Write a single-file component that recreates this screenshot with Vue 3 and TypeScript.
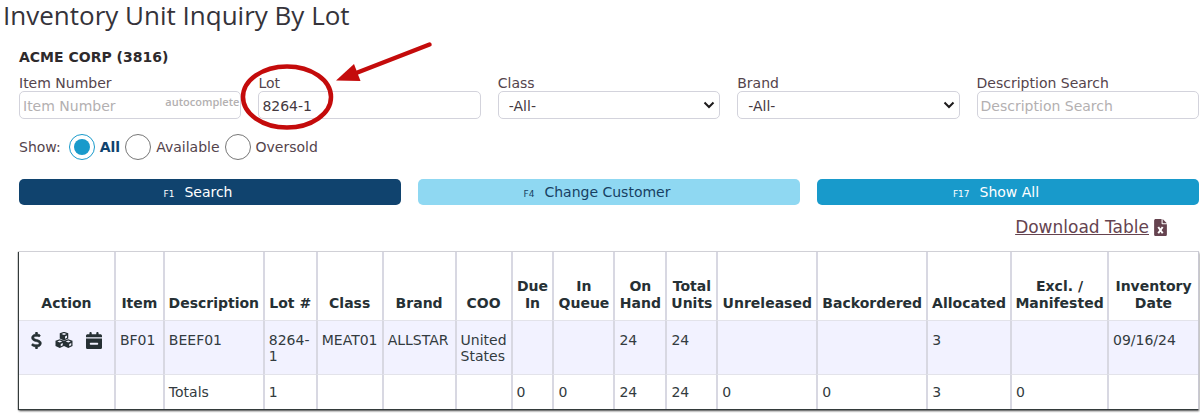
<script setup lang="ts">
import { ref } from 'vue'

interface Column {
  title: string
  width: number
}

const columns: Column[] = [
  { title: 'Action', width: 95 },
  { title: 'Item', width: 49 },
  { title: 'Description', width: 100 },
  { title: 'Lot #', width: 53 },
  { title: 'Class', width: 66 },
  { title: 'Brand', width: 73 },
  { title: 'COO', width: 56 },
  { title: 'Due In', width: 42 },
  { title: 'In Queue', width: 61 },
  { title: 'On Hand', width: 52 },
  { title: 'Total Units', width: 51 },
  { title: 'Unreleased', width: 100 },
  { title: 'Backordered', width: 110 },
  { title: 'Allocated', width: 84 },
  { title: 'Excl. / Manifested', width: 97 },
  { title: 'Inventory Date', width: 91 },
]
const totalWidth = columns.reduce((sum, c) => sum + c.width, 0)

const rows: string[][] = [
  ['BF01', 'BEEF01', '8264-1', 'MEAT01', 'ALLSTAR', 'United States', '', '', '24', '24', '', '', '3', '', '09/16/24'],
]
const totals: string[] = ['', '', 'Totals', '1', '', '', '', '0', '0', '24', '24', '0', '0', '3', '0', '']

const showOptions: string[] = ['All', 'Available', 'Oversold']
const show = ref('All')
const itemNumber = ref('')
const lot = ref('8264-1')
const itemClass = ref('-All-')
const brand = ref('-All-')
const description = ref('')
</script>

<template>
  <main class="page">
    <h1>Inventory Unit Inquiry By Lot</h1>
    <div class="content">
      <h2>ACME CORP (3816)</h2>

      <form @submit.prevent>
        <div class="fields">
          <div class="field">
            <label for="item">Item Number</label>
            <input id="item" v-model="itemNumber" type="text" placeholder="Item Number" />
            <span class="hint">autocomplete</span>
          </div>
          <div class="field">
            <label for="lot">Lot</label>
            <input id="lot" v-model="lot" type="text" />
            <svg class="marker" width="200" height="100" viewBox="0 0 200 100" aria-hidden="true">
              <ellipse cx="48" cy="62" rx="44" ry="30.5" fill="none" stroke="#c40b0b" stroke-width="4.5" />
              <path d="M190.500 9.500 112 40" stroke="#c40b0b" stroke-width="4.500" stroke-linecap="round" />
              <path d="M97 45.500 115 29 121.500 46z" fill="#c40b0b" />
            </svg>
          </div>
          <div class="field">
            <label for="class">Class</label>
            <select id="class" v-model="itemClass"><option>-All-</option></select>
            <svg class="chevron" width="12" height="8" viewBox="0 0 12 8" aria-hidden="true"><path d="M1.500 1.500 6 6l4.500-4.500" /></svg>
          </div>
          <div class="field">
            <label for="brand">Brand</label>
            <select id="brand" v-model="brand"><option>-All-</option></select>
            <svg class="chevron" width="12" height="8" viewBox="0 0 12 8" aria-hidden="true"><path d="M1.500 1.500 6 6l4.500-4.500" /></svg>
          </div>
          <div class="field">
            <label for="desc">Description Search</label>
            <input id="desc" v-model="description" type="text" placeholder="Description Search" />
          </div>
        </div>

        <div class="show" role="radiogroup" aria-label="Show">
          <span>Show:</span>
          <label v-for="o in showOptions" :key="o" :class="{ on: show === o }">
            <input v-model="show" type="radio" name="show" :value="o" />{{ o }}
          </label>
        </div>

        <div class="buttons">
          <button class="search" type="submit"><small>F1</small>Search</button>
          <button class="change" type="button"><small>F4</small>Change Customer</button>
          <button class="all" type="button"><small>F17</small>Show All</button>
        </div>
      </form>

      <div class="download">
        <a href="#"><span>Download Table</span><svg width="13" height="17" viewBox="0 0 384 512" aria-hidden="true">
            <path fill="currentColor" d="M48 0H224V136c0 13 11 24 24 24H384V464c0 27-21 48-48 48H48c-27 0-48-21-48-48V48C0 21 21 0 48 0zM256 0 384 128H256z" />
            <path d="M124 242 258 430M258 242 124 430" stroke="#fff" stroke-width="60" />
          </svg></a>
      </div>

      <table>
        <colgroup>
          <col v-for="c in columns" :key="c.title" :style="{ width: (c.width / totalWidth) * 100 + '%' }" />
        </colgroup>
        <thead>
          <tr><th v-for="c in columns" :key="c.title" scope="col">{{ c.title }}</th></tr>
        </thead>
        <tbody>
          <tr v-for="(row, r) in rows" :key="r" class="item">
            <td>
              <div class="actions">
                <button type="button" aria-label="Pricing">
                  <svg width="11" height="17" viewBox="0 0 320 512"><path fill="currentColor" stroke="currentColor" stroke-width="20" d="M160 0c17.700 0 32 14.300 32 32V67.700c1.600.2 3.100.4 4.700.7.4.1.7.1 1.100.2l48 8.800c17.400 3.200 28.900 19.900 25.700 37.200s-19.900 28.900-37.200 25.700l-47.500-8.700c-31.300-4.600-58.900-1.500-78.300 6.200s-27.200 18.300-29 28.100c-2 10.700-.5 16.700 1.200 20.400 1.800 3.900 5.500 8.300 12.800 13.200 16.300 10.700 41.300 17.700 73.700 26.300l2.900.8c28.600 7.600 63.600 16.800 89.600 33.800 14.200 9.300 27.600 21.900 35.900 39.500 8.500 17.900 10.300 37.900 6.400 59.200-6.900 38-33.100 63.400-65.600 76.700-13.700 5.600-28.600 9.200-44.400 11V480c0 17.700-14.300 32-32 32s-32-14.300-32-32V445.100c-24.400-3.800-66-14.500-93-26.500-16.100-7.200-23.400-26.100-16.200-42.200s26.100-23.400 42.200-16.200c20.900 9.300 55.300 18.500 75.200 21.600 31.900 4.700 58.200 2 76-5.300 16.900-6.900 24.600-16.900 26.800-28.900 1.900-10.600.4-16.700-1.300-20.400-1.900-4-5.600-8.400-13-13.300-16.400-10.700-41.500-17.700-74-26.300l-2.800-.7C119.400 279.300 84.400 270 58.400 253c-14.200-9.300-27.500-22-35.800-39.600-8.400-17.900-10.100-37.900-6.100-59.200C23.700 116 52.300 91.200 84.800 78.300c13.300-5.300 27.900-8.900 43.200-11V32c0-17.700 14.300-32 32-32z" /></svg>
                </button>
                <button type="button" aria-label="Units">
                  <svg width="18" height="16" viewBox="0 0 36 32">
                    <g v-for="p in [[18, 8], [9.5, 23], [26.5, 23]]" :key="p[0]" :transform="`translate(${p[0]} ${p[1]})`">
                      <path fill="currentColor" d="M0-8.500 8.500-5.500V5L0 9-8.500 5V-5.500z" />
                      <path fill="#f2f2ff" d="M0-6 5-4 0-2-5-4z" />
                      <path fill="#f2f2ff" d="M2 .8 6-1V3.400L2 5.500z" />
                    </g>
                  </svg>
                </button>
                <button type="button" aria-label="Calendar">
                  <svg width="16" height="17" viewBox="0 0 448 512" preserveAspectRatio="none"><path fill="currentColor" fill-rule="evenodd" d="M128 0c18 0 32 14 32 32V64H288V32c0-18 14-32 32-32s32 14 32 32V64h48c27 0 48 21 48 48v48H0V112c0-27 21-48 48-48H96V32c0-18 14-32 32-32zM0 192H448V464c0 27-21 48-48 48H48c-27 0-48-21-48-48zM312 384c17 0 30-12 30-29s-13-29-30-29H136c-17 0-30 12-30 29s13 29 30 29z" /></svg>
                </button>
              </div>
            </td>
            <td v-for="(cell, i) in row" :key="i">{{ cell }}</td>
          </tr>
          <tr class="totals">
            <td v-for="(cell, i) in totals" :key="i">{{ cell }}</td>
          </tr>
        </tbody>
      </table>
    </div>
  </main>
</template>

<style>
body {
  margin: 0;
  background: #fff;
}
</style>

<style scoped>
* {
  box-sizing: border-box;
}
.page {
  font: 14px/16px Verdana, 'DejaVu Sans', sans-serif;
  color: #54444c;
}
h1 {
  margin: 0;
  padding-left: 3px;
  font: 400 26px/30px 'Segoe UI', 'Open Sans', sans-serif;
  color: #35333a;
}
.content {
  padding: 19px 1px 4px 19px;
}
h2 {
  margin: 0 0 10px;
  font-size: 14px;
  line-height: 16px;
  color: #2e2a2c;
}
.fields {
  display: grid;
  grid-template-columns: repeat(5, 1fr);
  gap: 17px;
}
.field {
  position: relative;
}
.field label {
  display: block;
}
.field input,
.field select {
  display: block;
  width: 100%;
  height: 28px;
  margin: 0;
  padding: 2px 3px 0;
  border: 1px solid #d3d3dc;
  border-radius: 5px;
  background: #fff;
  font: inherit;
  color: #45393f;
  appearance: none;
}
.field select {
  padding-left: 10px;
}
.field input::placeholder {
  color: #b3b0b1;
  opacity: 1;
}
.hint {
  position: absolute;
  right: 2px;
  top: 19px;
  font: 600 11px/16px 'Open Sans', sans-serif;
  color: #b3b0b1;
  pointer-events: none;
}
.chevron {
  position: absolute;
  right: 5px;
  bottom: 10px;
  fill: none;
  stroke: #1d1b1c;
  stroke-width: 2;
  pointer-events: none;
}
.marker {
  position: absolute;
  left: -19px;
  top: -40px;
  z-index: 1;
  pointer-events: none;
}
.show {
  display: flex;
  align-items: center;
  gap: 5px;
  margin: 15px 0 19px;
}
.show span {
  margin-right: 3px;
}
.show label {
  display: flex;
  align-items: center;
  gap: 5px;
}
.show label.on {
  font-weight: 700;
  color: #10436e;
}
.show input {
  width: 26px;
  height: 26px;
  margin: 0;
  border: 1px solid #777;
  border-radius: 50%;
  background: #fff;
  appearance: none;
}
.show input:checked {
  border-color: #189acb;
  background: #189acb;
  background-clip: content-box;
  padding: 4px;
}
.buttons {
  display: grid;
  grid-template-columns: repeat(3, 1fr);
  gap: 17px;
}
.buttons button {
  display: flex;
  align-items: baseline;
  justify-content: center;
  gap: 10px;
  padding: 5px 24px 5px 0;
  border: 0;
  border-radius: 5px;
  font: inherit;
  color: #fff;
}
.buttons small {
  font-size: 9px;
  line-height: 9px;
}
.buttons .search {
  background: #10436e;
}
.buttons .change {
  background: #8fd8f2;
  color: #173f63;
}
.buttons .all {
  background: #189acb;
}
.download {
  display: flex;
  justify-content: flex-end;
  padding: 12px 32px 14px 0;
}
.download a {
  display: flex;
  align-items: center;
  gap: 5px;
  font-size: 17px;
  line-height: 20px;
  color: #65434f;
  text-decoration: none;
}
.download span {
  text-decoration: underline;
}
table {
  width: 100%;
  table-layout: fixed;
  border-collapse: separate;
  border-spacing: 0;
  border-top: 1px solid #d0d0d6;
  border-right: 1px solid #c9c9d3;
  box-shadow: -1px 1px 1px #333a3a, 0 2px 2px #555;
  color: #333b40;
}
th,
td {
  padding: 11px 4px 10px;
  border-left: 2px solid #d8d8e2;
  text-align: left;
  vertical-align: top;
}
th:first-child,
td:first-child {
  border-left: 0;
}
th {
  height: 69px;
  padding: 0 3px 8px;
  border-bottom: 1px solid #e3e3ea;
  text-align: center;
  vertical-align: bottom;
  line-height: 17px;
  color: #263034;
}
.item td {
  background: #f2f2ff;
  border-bottom: 1px solid #e3e3ea;
}
.totals td {
  padding-top: 9px;
  padding-bottom: 9px;
}
.actions {
  display: flex;
  justify-content: space-between;
  padding: 0 8px;
}
.actions button {
  display: flex;
  align-items: center;
  height: 16px;
  padding: 0;
  border: 0;
  background: none;
  color: #263034;
}
</style>
